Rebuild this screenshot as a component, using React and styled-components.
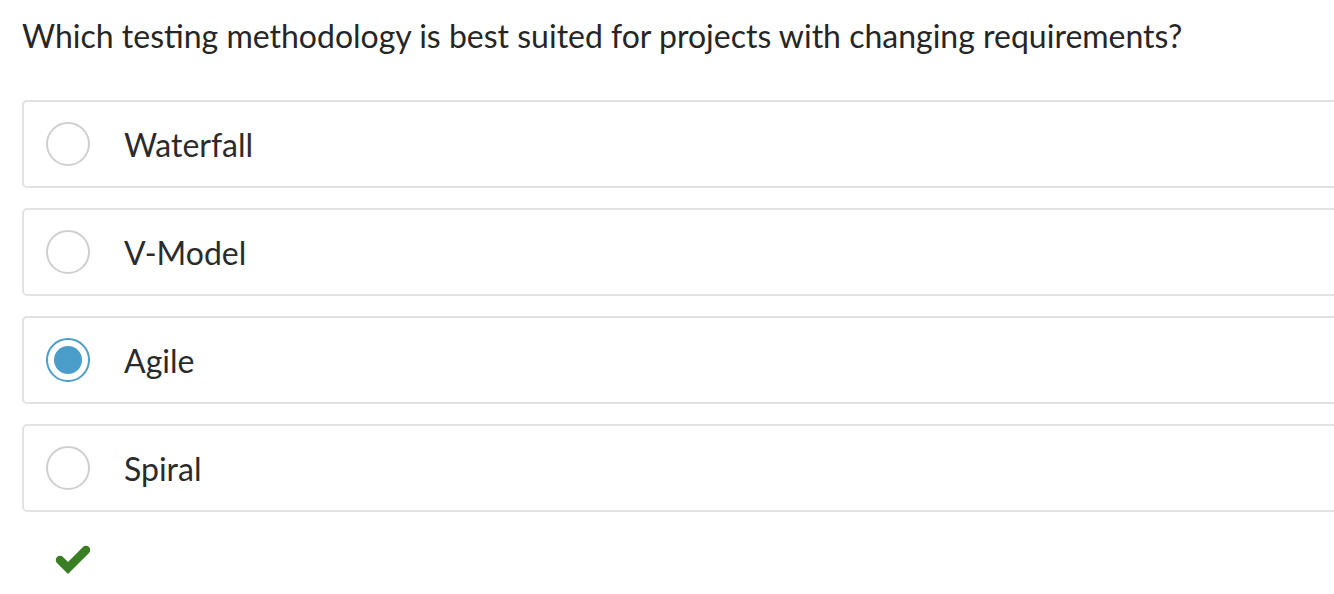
import React from 'react';
import styled, { createGlobalStyle } from 'styled-components';

const GlobalStyle = createGlobalStyle`
    html, body {
        margin: 0;
        padding: 0;
        background: #fff;
        overflow: hidden;
    }
    body {
        font-family: Lato, "Open Sans", sans-serif;
        color: #2b2b2b;
    }
`

const Page = styled.div`
    padding: 14px 0 0 22px;
    width: 1340px;
`

const Question = styled.h1`
    margin: 0 0 42px 0;
    font-size: 32px;
    font-weight: 400;
    line-height: 44px;
    color: #262626;
`

const Options = styled.div`
    display: flex;
    flex-direction: column;
    gap: 20px;
`

const Option = styled.label`
    display: flex;
    align-items: center;
    gap: 34px;
    height: 84px;
    padding: 0 22px;
    border: 2px solid #e2e2e2;
    border-radius: 5px;
    box-sizing: content-box;
    cursor: pointer;
`

const Radio = styled.span`
    width: 40px;
    height: 40px;
    border-radius: 50%;
    border: 2px solid ${p => (p.checked ? '#4a9ec9' : '#cfcfcf')};
    display: flex;
    align-items: center;
    justify-content: center;
    flex-shrink: 0;

    &::after {
        content: '';
        display: ${p => (p.checked ? 'block' : 'none')};
        width: 28px;
        height: 28px;
        border-radius: 50%;
        background: #4a9ec9;
    }
`

const OptionText = styled.span`
    font-size: 32px;
    color: #2b2b2b;
`

const Result = styled.div`
    padding: 32px 0 0 32px;
`

const options = ['Waterfall', 'V-Model', 'Agile', 'Spiral'];

const App = () => {
    return (
        <>
            <GlobalStyle />
            <Page>
                <Question>Which testing methodology is best suited for projects with changing requirements?</Question>
                <Options>
                    {options.map(opt => (
                        <Option key={opt}>
                            <Radio checked={opt === 'Agile'} />
                            <OptionText>{opt}</OptionText>
                        </Option>
                    ))}
                </Options>
                <Result>
                    <svg width="38" height="32" viewBox="0 0 38 32">
                        <path d="M6 16 L14 24 L32 6" fill="none" stroke="#3b7d22" strokeWidth="8.5" strokeLinecap="round" strokeLinejoin="miter" />
                    </svg>
                </Result>
            </Page>
        </>
    )
}

export default App;
